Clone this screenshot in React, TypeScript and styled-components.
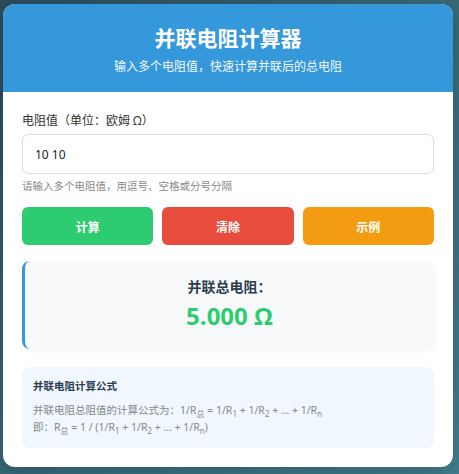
import styled, { createGlobalStyle } from 'styled-components';

const GlobalStyle = createGlobalStyle`
  html, body {
    margin: 0;
    padding: 0;
    height: 100%;
  }
  body {
    background: linear-gradient(135deg, #2c4a5a 0%, #3a6f80 60%, #437f8e 100%);
    font-family: "Segoe UI", "Noto Sans", "Noto Sans CJK SC", sans-serif;
    text-spacing-trim: space-all;
  }
  #root {
    padding: 4px 0 0 3px;
  }
`;

const Card = styled.div`
  width: 450px;
  background: #fff;
  border-radius: 12px;
  overflow: hidden;
  box-shadow: 0 8px 24px rgba(0, 0, 0, 0.2);
`;

const Header = styled.header`
  height: 88px;
  background: #3498db;
  color: #fff;
  display: flex;
  flex-direction: column;
  align-items: center;
  justify-content: center;
  gap: 8px;
  padding-top: 3px;
  box-sizing: border-box;
`;

const Title = styled.h1`
  margin: 0;
  font-size: 21px;
  font-weight: 700;
  line-height: 26px;
`;

const Subtitle = styled.p`
  margin: 0;
  font-size: 12px;
  line-height: 16px;
  opacity: 0.95;
`;

const Body = styled.main`
  padding: 20px 19px 19px;
  display: flex;
  flex-direction: column;
`;

const Label = styled.label`
  font-size: 12px;
  color: #333;
  line-height: 18px;
  margin-bottom: 4px;
`;

const Input = styled.input`
  height: 40px;
  box-sizing: border-box;
  border: 1px solid #dcdde1;
  border-radius: 6px;
  padding: 0 12px;
  font-family: "Segoe UI", "Noto Sans", sans-serif;
  font-size: 12px;
  color: #222;
  outline: none;
`;

const Hint = styled.small`
  font-size: 10.5px;
  color: #888;
  line-height: 14px;
  margin-top: 5px;
`;

const Buttons = styled.div`
  display: grid;
  grid-template-columns: repeat(3, 1fr);
  gap: 9px;
  margin-top: 14px;
`;

const Button = styled.button<{ $bg: string }>`
  height: 38px;
  border: none;
  border-radius: 6px;
  background: ${({ $bg }) => $bg};
  color: #fff;
  font-family: "Noto Sans CJK SC", sans-serif;
  font-size: 12px;
  font-weight: 700;
`;

const Result = styled.section`
  margin-top: 16px;
  height: 88px;
  box-sizing: border-box;
  background: #f8f9fa;
  border-left: 3px solid #3498db;
  border-radius: 8px;
  box-shadow: 0 2px 6px rgba(0, 0, 0, 0.04);
  display: flex;
  flex-direction: column;
  align-items: center;
  justify-content: center;
  gap: 4px;
  padding-bottom: 2px;
`;

const ResultTitle = styled.div`
  font-size: 14px;
  font-weight: 700;
  color: #2c3e50;
  line-height: 20px;
`;

const ResultValue = styled.div`
  font-family: "Segoe UI", "Open Sans", "Noto Sans", sans-serif;
  font-size: 24px;
  font-weight: 700;
  color: #2ecc71;
  line-height: 30px;
`;

const Formula = styled.section`
  margin-top: 18px;
  height: 81px;
  box-sizing: border-box;
  background: #f0f7ff;
  border-radius: 8px;
  padding: 10px 11px;
`;

const FormulaTitle = styled.h3`
  margin: 0 0 7px;
  font-size: 10.5px;
  font-weight: 700;
  color: #2c3e50;
  line-height: 18px;
`;

const FormulaLine = styled.p`
  margin: 0;
  font-size: 10.5px;
  color: #888;
  line-height: 17px;
  sub {
    font-size: 8px;
    line-height: 0;
  }
`;

export default function App() {
  return (
    <>
      <GlobalStyle />
      <Card>
        <Header>
          <Title>并联电阻计算器</Title>
          <Subtitle>输入多个电阻值，快速计算并联后的总电阻</Subtitle>
        </Header>
        <Body>
          <Label>电阻值（单位：欧姆 Ω）</Label>
          <Input defaultValue="10 10" />
          <Hint>请输入多个电阻值，用逗号、空格或分号分隔</Hint>
          <Buttons>
            <Button $bg="#2ecc71">计算</Button>
            <Button $bg="#e74c3c">清除</Button>
            <Button $bg="#f39c12">示例</Button>
          </Buttons>
          <Result>
            <ResultTitle>并联总电阻：</ResultTitle>
            <ResultValue>5.000 Ω</ResultValue>
          </Result>
          <Formula>
            <FormulaTitle>并联电阻计算公式</FormulaTitle>
            <FormulaLine>
              并联电阻总阻值的计算公式为：1/R<sub>总</sub> = 1/R<sub>1</sub> + 1/R<sub>2</sub> + … + 1/R<sub>n</sub>
            </FormulaLine>
            <FormulaLine>
              即：R<sub>总</sub> = 1 / (1/R<sub>1</sub> + 1/R<sub>2</sub> + … + 1/R<sub>n</sub>)
            </FormulaLine>
          </Formula>
        </Body>
      </Card>
    </>
  );
}
